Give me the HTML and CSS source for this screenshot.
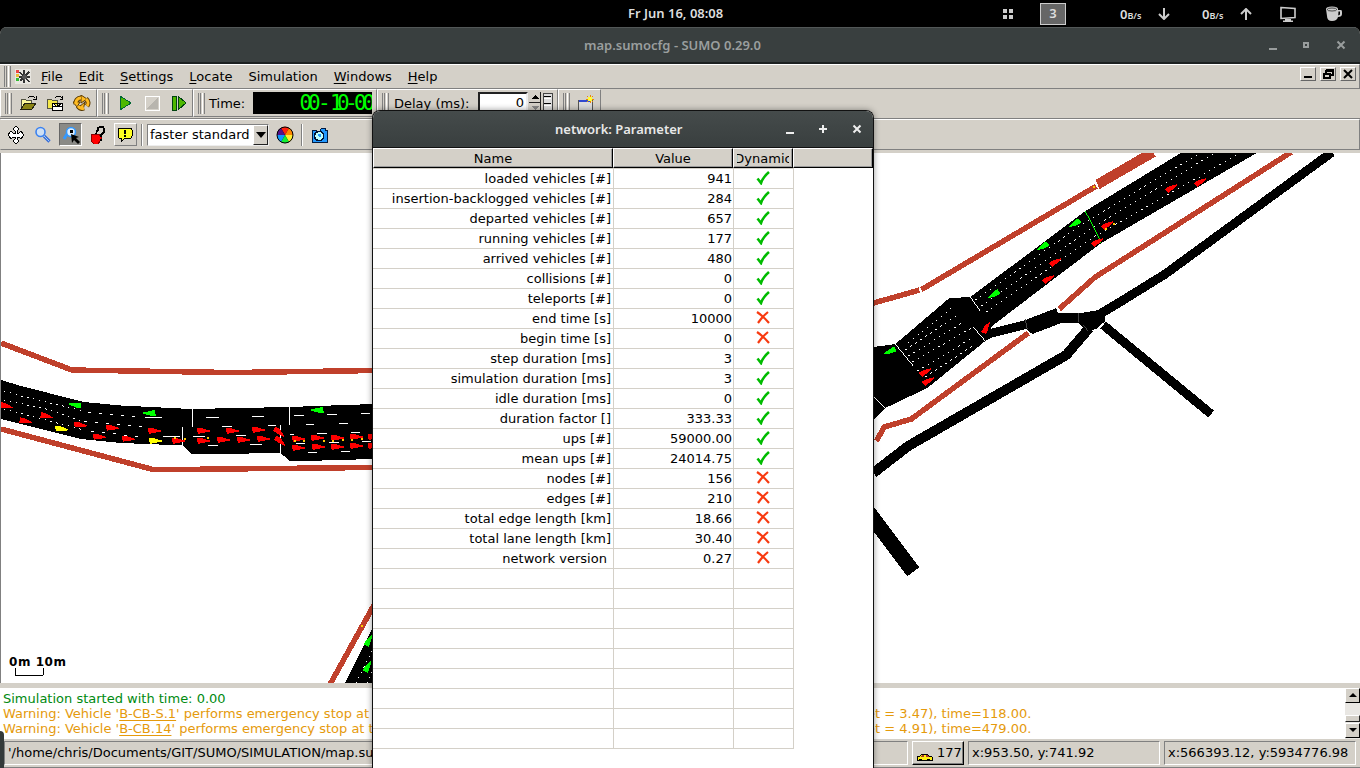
FILE: index.html
```
<!DOCTYPE html>
<html lang="en">
<head>
<meta charset="utf-8">
<title>map.sumocfg - SUMO 0.29.0</title>
<link rel="stylesheet" href="styles.css">
</head>
<body>
<header class="panel">
  <span class="clock">Fr Jun 16, 08:08</span>
  <div class="tray">
    <svg class="grid" width="10" height="10"><path d="M0 0h4v4H0zM6 0h4v4H6zM0 6h4v4H0zM6 6h4v4H6z"/></svg>
    <span class="workspace">3</span>
    <span class="net">0<small>B/s</small></span>
    <svg class="arrow" width="12" height="12"><path d="M6 0v11M1 6l5 5 5-5"/></svg>
    <span class="net">0<small>B/s</small></span>
    <svg class="arrow" width="12" height="12"><path d="M6 12V1M1 6l5-5 5 5"/></svg>
    <svg class="monitor" width="16" height="16"><path d="M1 1.500l14 1v9l-14 1z" fill="none" stroke="#ccc" stroke-width="1.600"/><path d="M5 13h6v1.500h2V16H3v-1.500h2z" fill="#ccc"/></svg>
    <svg class="cup" width="17" height="16"><path d="M0 3q0-2.500 6-2.500T12 3v1h3q1 0 1 2v2q0 3-4 3-1 4-6 4T1 10z" fill="#ccc"/><ellipse cx="6" cy="3.500" rx="4.800" ry="1.500" fill="none" stroke="#222" stroke-width=".8"/><path d="M12.500 5.500h1.500v3l-1.800 1z" fill="#000"/></svg>
  </div>
</header>

<main class="app">
  <div class="titlebar">
    <span class="title">map.sumocfg - SUMO 0.29.0</span>
    <svg class="winbtns" width="82" height="12"><path d="M3 9h8v2H3zM37 3h6v6h-6zM39 5v2h2V5z" fill="#999d9d" fill-rule="evenodd"/><path d="M71.500 2.500l7 7m0-7l-7 7" stroke="#999d9d" stroke-width="2"/></svg>
  </div>

  <nav class="menubar">
    <i class="grip"></i>
    <svg class="logo" width="16" height="16" shape-rendering="crispEdges"><path d="M0 0h16v15H0z" fill="#e8e6e0"/><path d="M1 1h3v3H1z" fill="#e44"/><path d="M1 5h3v3H1z" fill="#eb3"/><path d="M1 9h3v3H1z" fill="#3b3"/><path d="M9 1v13M4 8h11M5 3l9 10M14 3L5 12" stroke="#333" stroke-width="1.500"/><path d="M9 5l3 3-3 3-3-3z" fill="#555"/></svg>
    <span><u>F</u>ile</span><span><u>E</u>dit</span><span><u>S</u>ettings</span><span><u>L</u>ocate</span><span>Simulation</span><span><u>W</u>indows</span><span><u>H</u>elp</span>
    <div class="mdi">
      <b><svg width="14" height="12"><path d="M3 8h8v2H3z"/></svg></b>
      <b><svg width="14" height="12" shape-rendering="crispEdges"><path d="M5 2h7v5h-2M5 2v3M5 3h7M3 6h6v4H3zM3 6.500h6" fill="none" stroke="#000" stroke-width="1.300"/></svg></b>
      <b><svg width="14" height="12"><path d="M3 2l8 8m0-8l-8 8" stroke="#000" stroke-width="2"/></svg></b>
    </div>
  </nav>

  <div class="toolrow">
    <div class="tools files">
      <i class="grip"></i>
      <svg width="18" height="16" shape-rendering="crispEdges"><path d="M2 4h4l1 1h5v9H2z" fill="#fbf99c" stroke="#554" /><path d="M2 14l4-6h11l-4 6z" fill="#8a8414" stroke="#221"/><path d="M9 3l2-2h3l2 2m1-2v3h-3" fill="none" stroke="#000"/></svg>
      <svg width="18" height="16" shape-rendering="crispEdges"><path d="M1 4h4l1 1h5v8H1z" fill="#f4e848" stroke="#554"/><path d="M9 3l2-2h3l2 2m0-2v3h-2" fill="none" stroke="#000"/><path d="M6 8h10v7H6zM6 11h10M11 8v4M8 9l3 3 4-3" fill="#fff" stroke="#000"/></svg>
      <svg width="18" height="16"><path d="M8 3a5 5 0 0 0-5 6m2 2a5 5 0 0 0 6 2m3-2a5 5 0 0 0-1-7" fill="none" stroke="#5a3a00" stroke-width="5"/><path d="M8 0l6 4-6 4zM0 7h7L4 12zM10 15l-4-3 6-5z" fill="#fb2" stroke="#5a3a00"/><path d="M8 3a5 5 0 0 0-5 6m2 2a5 5 0 0 0 6 2m3-2a5 5 0 0 0-1-7" fill="none" stroke="#fb2" stroke-width="3"/></svg>
    </div>
    <div class="tools run">
      <i class="grip"></i>
      <svg width="16" height="16" shape-rendering="crispEdges"><path d="M3 1l11 7-11 7z" fill="#4db800" stroke="#063"/></svg>
      <svg width="16" height="16" shape-rendering="crispEdges"><path d="M1 1h14v14H1z" fill="#d4d0c8" stroke="#fff"/><path d="M14 2v12H2z" fill="#b8b5ae"/></svg>
      <svg width="16" height="16" shape-rendering="crispEdges"><path d="M1 1h4v14H1zM7 1l8 7-8 7z" fill="#4db800" stroke="#041"/></svg>
    </div>
    <div class="tools time">
      <i class="grip"></i><span>Time:</span>
      <svg class="lcd" width="119" height="22"><text y="18" x="46.500 55 65 77 84 92 101 109.500">00-10-00</text></svg>
    </div>
    <div class="tools delay">
      <i class="grip"></i><span>Delay (ms):</span>
      <span class="field">0</span>
      <svg class="spin" width="24" height="22" shape-rendering="crispEdges"><path d="M0 0h12v10H0zM0 11h12v10H0z" fill="#d4d0c8"/><path d="M0 10h11V0M0 21h11V11" fill="none" stroke="#222"/><path d="M6 3l4 4H2z"/><path d="M6 18l4-4H2z" fill="#888"/><path d="M14 1h9v21h-9z" fill="#ddd" stroke="#444"/><path d="M15 4h7M15 11h7M15 18h7" stroke="#000"/><path d="M15 6h7M15 13h7" stroke="#fff"/></svg>
    </div>
    <div class="tools view">
      <i class="grip"></i>
      <svg width="18" height="16" shape-rendering="crispEdges"><path d="M1 5h14v11H1z" fill="#ddd" stroke="#555"/><path d="M2 5h12v2H2z" fill="#3048d0"/><path d="M13 0v8M9 4h8M10 1l6 6M16 1l-6 6" stroke="#e80"/><path d="M11 2h4v4h-4z" fill="#ff3"/></svg>
    </div>
  </div>

  <div class="viewbar">
    <svg class="vb" width="18" height="18" shape-rendering="crispEdges"><path d="M9 0l3 3-2 2v2h2l2-2 3 4-3 4-2-2h-2v2l2 2-3 3-3-3 2-2v-2H6l-2 2-3-4 3-4 2 2h2V5L6 3z" fill="#fff" stroke="#000"/></svg>
    <svg class="vb" width="18" height="18"><path d="M10 10l5.500 5.500" stroke="#3b6fd8" stroke-width="3.200"/><path d="M10 10l5 5" stroke="#9cf"/><circle cx="6.500" cy="6" r="4.500" fill="#cfe0f4" stroke="#3b82f0" stroke-width="1.600"/></svg>
    <span class="pressed"><svg width="18" height="18"><path d="M5 8l-3 5" stroke="#39f" stroke-width="3"/><circle cx="9" cy="6" r="4.500" fill="#def" stroke="#39f" stroke-width="1.600"/><path d="M8 4h3v3H8z"/><path d="M9 8l8 3-3 1 4 4-2 2-4-4-2 3z"/></svg></span>
    <svg class="vb" width="18" height="18" shape-rendering="crispEdges"><path d="M3 8h3l1 1 2-1 3 2v4l-3 4H5l-3-3v-5z" fill="#f00" stroke="#800"/><path d="M7 8l1-3 2-1M9 4V2l2-1h3l1 2v3l-3 3v2M12 13v2" fill="none" stroke="#000" stroke-width="1.600"/></svg>
    <span class="raised"><svg width="16" height="16" shape-rendering="crispEdges"><path d="M2 1h12l1 2v6l-1 2H8l-4 4v-4H2L1 9V3z" fill="#ff2" stroke="#000"/><path d="M7 3h2v4H7zM7 8h2v2H7z"/></svg></span>
    <i class="vsep"></i>
    <span class="combo">faster standard<b><svg width="12" height="8"><path d="M1 1h10L6 7z"/></svg></b></span>
    <svg class="wheel" width="18" height="18" viewBox="-9 -9 18 18"><circle r="8"/><path d="M0 0L-4-7A8 8 0 0 1 4-7z" fill="#f21"/><path d="M0 0L4-7A8 8 0 0 1 8 0z" fill="#f80"/><path d="M0 0H8A8 8 0 0 1 4 7z" fill="#fe3"/><path d="M0 0L4 7A8 8 0 0 1-4 7z" fill="#1e3"/><path d="M0 0L-4 7A8 8 0 0 1-8 0z" fill="#19f"/><path d="M0 0H-8A8 8 0 0 1-4-7z" fill="#518"/><circle r="8" fill="none" stroke="#000"/></svg>
    <i class="vsep"></i>
    <svg class="cam" width="18" height="16" shape-rendering="crispEdges"><path d="M1 3h4v2h4V3l2-2h3v2h2v12H1z" fill="#29f" stroke="#001a40"/><circle cx="8" cy="9" r="4.500" fill="#bff" stroke="#013" stroke-width="1.500"/><path d="M7 7h3v3H8z" fill="#29f"/></svg>
  </div>

  <svg class="map" width="1360" height="530" viewBox="0 153 1360 530" shape-rendering="crispEdges">
    <g class="track">
      <path d="M0 343L71 370 231 372.500 373 370.500M0 429L152 469.500H180L373 467.500"/>
      <path d="M873 303L919 290M921 289.500L1096 186M1059 309L1095 277 1291 152M1028 333L911 419 884 427 876 441M329 685L375 602"/>
      <path d="M1097 184.500L1153 152" stroke-width="10"/>
    </g>
    <g class="road">
      <path d="M0 380L20 386 83 402 120 405.500 190 409 288 407 373 404V459L289 461.500 280 453 191 454.500 182 445.500 120 443 80 439 0 419z"/>
      <path d="M344 684L375 622V684z"/>
      <path d="M1182 152L1085 211 970 297 949 298 895 344 873 347V420L885 408 927 388 985 341 993 337 1026 329 1032 334 1061 323 1080 323 1079 313 1058 314 1056 308 1025 320 990 329 993 325 1060 274 1101 243 1258 152z"/>
      <path d="M1058 313H1080L1105 309V321L1096 329 1086 331 1078 323H1058z"/>
    </g>
    <g class="lane">
      <path d="M1098 315L1123 300 1165 274 1332 152M1103 325L1211 414"/>
      <path d="M1089 328L1066 355 908 446 873 473" stroke-width="10"/>
      <path d="M868 512L913 572" stroke-width="15"/>
    </g>
    <g class="dots">
      <path d="M3 391L20 396 83 411M3 400L50 410 83 422M3 409L83 430M908 343L955 305M905 350L959 314M908 356L965 321M912 362L971 328M917 371L973 337M925 377L975 344M975 300L1085 222 1200 153M981 306L1090 229 1214 153M986 312L1095 236 1240 153M355 684L373 648M366 684L373 668"/>
      <path class="mid" d="M87 412L136 417M83 421L142 427M90 431L140 437"/>
    </g>
    <path class="dash" d="M144 417.500h17M162 436.500h17M205 417.500h13M251 416.500h12M221 426.500h10M267 425.500h8M192 436.500h12M235 435.500h10M207 445.500h10M249 444.500h12M293 415.500h10M326 414.500h10M360 413.500h9M305 424.500h8M338 423.500h9M316 433.500h10M350 432.500h9M289 434.500h4M295 443.500h9M328 442.500h10M361 441.500h9M307 452.500h9M340 451.500h9M191.500 409v18M181.500 427v19M288.500 407v18M279.500 425v28M895 344l18 22M970 297l10 14M973 327l12 14M873 396l12 12M919 286l2 6M1095 180l3 7"/>
    <path d="M1025 319l2 10M1078 313v9M1083 325l5 6" stroke="#444"/>
    <path d="M1085 211l9 17 7 15" stroke="#0f0"/>
    <g id="vehicles"></g>
    <text class="scale" x="8" y="666" textLength="57">0m 10m</text>
    <path d="M14.500 668v7.500h28V668" fill="none" stroke="#000"/>
  </svg>

  <div class="log">
    <div class="lines">
      <p class="ok">Simulation started with time: 0.00</p>
      <p><span>Warning: Vehicle '<u>B-CB-S.1</u>' performs emergency stop at</span><span class="tail">et = 3.47), time=118.00.</span></p>
      <p><span>Warning: Vehicle '<u>B-CB.14</u>' performs emergency stop at t</span><span class="tail">et = 4.91), time=479.00.</span></p>
    </div>
    <div class="scroll"><b><svg width="8" height="5"><path d="M4 0l4 4H0z"/></svg></b><i></i><b><svg width="8" height="5"><path d="M0 0h8L4 4z"/></svg></b></div>
  </div>

  <footer class="status">
    <span class="sunk path">'/home/chris/Documents/GIT/SUMO/SIMULATION/map.sumocfg' loaded.</span>
    <span class="count"><svg width="17" height="9" shape-rendering="crispEdges"><path d="M1 4l3-1 2-2h5l2 2 3 1v3H1z" fill="#fe1" stroke="#000"/><path d="M6 2h2v2H5zM10 2h1l2 2h-3z" fill="#a33"/><path d="M3 6h3v2H3zM11 6h3v2h-3z"/></svg>177</span>
    <span class="sunk pos">x:953.50, y:741.92</span>
    <span class="sunk geo">x:566393.12, y:5934776.98</span>
  </footer>
</main>

<section class="dialog">
  <div class="dtitle">
    <span class="title">network: Parameter</span>
    <svg class="winbtns" width="82" height="12"><path d="M5 9h8v2H5zM38 5h8v2h-8zM41 2h2v8h-2z" fill="#eee"/><path d="M72.500 2.500l7 7m0-7l-7 7" stroke="#eee" stroke-width="2"/></svg>
  </div>
  <div class="thead"><span>Name</span><span>Value</span><span class="dyn"><em>Dynamic</em></span><span></span></div>
  <div class="tbody" id="rows"></div>
</section>
<i class="corner"></i>
<script src="app.js"></script>
</body>
</html>
```
FILE: styles.css
```
* { box-sizing: border-box; }
body { margin: 0; width: 1360px; height: 768px; overflow: hidden; background: #000; font: 13px "DejaVu Sans", sans-serif; color: #000; position: relative; }
svg { display: block; flex: none; }
p { margin: 0; }
.panel { height: 27px; display: flex; align-items: center; color: #ddd; font: 600 13px "Noto Sans", sans-serif; }
.clock { margin-left: 628px; width: 380px; flex: none; padding-bottom: 1px; }
.tray { display: flex; align-items: center; padding-left: -5px; }
.grid { fill: #ccc; margin-left: -5px; }
.workspace { width: 26px; height: 22px; border: 1px solid #ccc; background: #666; margin-left: 27px; text-align: center; line-height: 19px; }
.net { margin-left: 54px; width: 23px; white-space: nowrap; }
.net small { font-size: 9px; }
.arrow { fill: none; stroke: #ccc; stroke-width: 2; margin-left: 15px; }
.arrow + .net { margin-left: 32px; }
.monitor { margin-left: 28px; }
.cup { margin-left: 30px; }

.app { height: 741px; display: flex; flex-direction: column; background: #d4d0c8; border-radius: 7px 7px 0 0; overflow: hidden; }
.titlebar { height: 37px; flex: none; background: #393f3f; border-top: 1px solid #525757; border-bottom: 2px solid #1c2020; display: flex; align-items: center; color: #9a9e9e; }
.title { font: 600 13px "Noto Sans", sans-serif; white-space: nowrap; flex: none; }
.titlebar .title { margin-left: 584px; width: 682px; }
.grip { width: 7px; height: 21px; flex: none; border: solid; border-width: 0 1px; border-color: #fff #808080; background: linear-gradient(90deg, #d4d0c8 1px, #808080 1px 2px, #d4d0c8 2px 3px, #fff 3px 4px, #d4d0c8 4px); margin-left: 4px; }
.menubar { height: 25px; flex: none; border-top: 1px solid #fff; border-bottom: 1px solid #808080; border-right: 1px solid #808080; display: flex; align-items: center; }
.logo { margin: 0 2px 0 4px; }
.menubar > span { padding: 0 8px; }
u { text-underline-offset: 2px; }
.mdi { margin-left: auto; display: flex; gap: 4px; padding-right: 3px; align-self: flex-start; padding-top: 2px; }
.mdi b { width: 16px; height: 14px; border: 1px solid; border-color: #fff #666 #666 #fff; }
.toolrow { height: 30px; flex: none; display: flex; border-bottom: 1px solid #808080; }
.tools { height: 28px; border: 1px solid; border-color: #fff #808080 #808080 #fff; display: flex; align-items: center; }
.files { width: 97px; padding-right: 5px; }
.files svg { margin-left: 7px; }
.files svg + svg { margin-left: 9px; }
.run { width: 96px; }
.run svg { margin-left: 8px; }
.run svg + svg { margin-left: 11px; }
.time { width: 184px; }
.time span { margin-left: 4px; width: 44px; }
.lcd { background: #000; fill: #0f0; font: 21px "Liberation Sans Narrow", "DejaVu Sans Mono", monospace; }
.delay { width: 181px; }
.delay > span:first-of-type { margin: 0 7px 0 5px; width: 77px; }
.field { width: 50px; height: 22px; background: #fff; border: 2px solid; border-color: #222 #eee #eee #222; text-align: right; padding: 1px 2px; }
.spin { margin-left: 1px; }
.view { width: 43px; }
.view svg { margin-left: 7px; }
.viewbar { height: 31px; margin-bottom: 3px; flex: none; border: 1px solid; border-color: #fff #808080 #808080 #d4d0c8; display: flex; align-items: center; }
.vb { margin-left: 6px; }
.vb + .vb { margin-left: 9px; }
.pressed { width: 23px; height: 23px; margin-left: 7px; background: #8a8a86; border: 1px solid; border-color: #666 #fff #fff #666; padding: 2px; }
.pressed + .vb { margin-left: 7px; }
.raised { width: 23px; height: 23px; margin-left: 7px; border: 1px solid; border-color: #fff #808080 #808080 #fff; padding: 3px 2px; }
.vsep { width: 2px; height: 22px; border-left: 1px solid #808080; border-right: 1px solid #fff; margin-left: 4px; }
.combo { width: 122px; height: 22px; margin-left: 4px; background: #fff; border: 1px solid; border-color: #808080 #eee #eee #808080; display: flex; align-items: center; padding-left: 2px; white-space: nowrap; }
.combo b { margin-left: auto; width: 15px; height: 20px; background: #d4d0c8; border: 1px solid; border-color: #fff #222 #222 #fff; display: flex; align-items: center; justify-content: center; flex: none; }
.wheel { margin-left: 7px; }
.wheel + .vsep { margin-left: 7px; }
.cam { margin-left: 8px; }

.map { background: #fff; flex: none; border-left: 1px solid #808080; }
.track { fill: none; stroke: #c0402b; stroke-width: 5.5; }
.lane { fill: none; stroke: #000; stroke-width: 9; }
.dots { fill: none; stroke: #fff; stroke-width: 1; stroke-dasharray: 1.5 4.5; }
.dots .mid { stroke-dasharray: 3 8; }
.dash { stroke: #fff; stroke-width: 1; }
.scale { font: bold 12px "DejaVu Sans", sans-serif; }

.log { margin-top: 5px; height: 51px; flex: none; background: #fff; display: flex; }
.lines { flex: 1; padding: 3px 0 0 3px; line-height: 15px; color: #e59a0c; }
.lines p { display: flex; white-space: nowrap; }
.lines p > span:first-child { width: 864px; }
.lines .ok { color: #008a10; }
.scroll { width: 15px; display: flex; flex-direction: column; background: #e9e7e3; }
.scroll b { height: 15px; background: #d4d0c8; border: 1px solid; border-color: #fff #000 #000 #fff; display: flex; align-items: center; justify-content: center; }
.scroll i { height: 7px; margin: 12px 0 1px; background: #d4d0c8; border: 1px solid; border-color: #fff #222 #222 #fff; }
.status { flex: 1; display: flex; align-items: flex-start; padding: 2px 4px 0; border-bottom: 1px solid #808080; }
.sunk { height: 24px; border: 1px solid; border-color: #808080 #fff #fff #808080; padding: 3px; white-space: nowrap; overflow: hidden; flex: none; }
.path { width: 904px; }
.count { width: 52px; height: 24px; margin-left: 4px; border: 1px solid; border-color: #fff #000 #000 #fff; box-shadow: inset -1px -1px #808080; display: flex; padding: 3px; }
.count svg { margin: 8px 4px 0 0; }
.pos { width: 192px; margin-left: 4px; }
.geo { width: 192px; margin-left: 4px; }

.dialog { position: absolute; left: 372px; top: 110px; width: 502px; height: 658px; background: #fff; border: 1px solid #111; border-bottom: 0; border-radius: 8px 8px 0 0; overflow: hidden; box-shadow: 0 0 6px rgba(0,0,0,.4); }
.dtitle { height: 37px; background: linear-gradient(#454b4b, #393f3f); border-bottom: 1px solid #111; display: flex; align-items: center; color: #e8e8e8; }
.dtitle .title { margin-left: 182px; width: 226px; }
.thead { height: 20px; display: flex; background: #d4d0c8; }
.thead span { width: 120px; border: 1px solid; border-color: #fff #000 #000 #fff; box-shadow: inset -1px -1px #999; text-align: center; line-height: 20px; }
.thead span:first-child { width: 240px; }
.thead span:nth-child(4) { width: 80px; }
.thead .dyn { width: 60px; padding: 0 3px; display: flex; }
.dyn em { font-style: normal; overflow: hidden; width: 52px; display: flex; justify-content: center; }
.tbody { width: 421px; border-top: 1px solid #d4d0c8; }
.row { height: 20px; display: flex; border-bottom: 1px solid #d4d0c8; line-height: 19px; text-align: right; white-space: pre; }
.row span { border-right: 1px solid #d4d0c8; width: 120px; padding-right: 1px; }
.row span:first-child { width: 241px; }
.row span:last-child { width: 60px; padding: 2px 0 0 22px; }
.row span:nth-child(1) { padding-right: 2px; }
.corner { position: absolute; left: 0; top: 731px; width: 4px; height: 37px; background: #343a3a; border-top-right-radius: 4px; }
```
FILE: app.js
```
const yes = '<svg width="14" height="14"><path d="M1.5 7.500L5 12Q7 6 13 1" fill="none" stroke="#0b0" stroke-width="2.600"/></svg>';
const no = '<svg width="14" height="14"><path d="M1 1Q7 5 13 12M12 1Q7 5 2 12" fill="none" stroke="#f83a10" stroke-width="2.200"/></svg>';
const data = [
  ["loaded vehicles [#]", "941", 1], ["insertion-backlogged vehicles [#]", "284", 1],
  ["departed vehicles [#]", "657", 1], ["running vehicles [#]", "177", 1],
  ["arrived vehicles [#]", "480", 1], ["collisions [#]", "0", 1], ["teleports [#]", "0", 1],
  ["end time [s]", "10000", 0], ["begin time [s]", "0", 0], ["step duration [ms]", "3", 1],
  ["simulation duration [ms]", "3", 1], ["idle duration [ms]", "0", 1],
  ["duration factor []", "333.33", 1], ["ups [#]", "59000.00", 1], ["mean ups [#]", "24014.75", 1],
  ["nodes [#]", "156", 0], ["edges [#]", "210", 0], ["total edge length [km]", "18.66", 0],
  ["total lane length [km]", "30.40", 0], ["network version ", "0.27", 0]
];
while (data.length < 29) data.push(["", "", null]);
document.getElementById("rows").innerHTML = data.map(([n, v, d]) =>
  `<div class="row"><span>${n}</span><span>${v}</span><span>${d === null ? "" : d ? yes : no}</span></div>`).join("");

// x, y, heading in degrees
const cars = {
  "#f00": [[5,406,15],[24,421,12],[45,416,15],[79,425,8],[98,437,3],[111,428,4],[127,439,4],[153,431,0],[177,441,0],
    [202,431,0],[202,441,0],[231,431,0],[222,440,0],[242,440,0],[257,430,0],[262,439,0],[278,432,40],[279,441,40],
    [297,439,0],[297,448,0],[316,438,0],[317,447,0],[336,438,0],[336,447,0],[355,437,0],[355,446,0],[373,437,0],[373,446,0],
    [925,372,-30],[928,381,-30],[986,328,-60],[1048,279,-30],[1055,262,-30],[1107,225,-30],[1097,242,-30],[1171,188,-30],[1200,182,-30]],
  "#ff0": [[60,429,8],[154,441,0]],
  "#0f0": [[75,405,190],[149,413,180],[317,410,180],[890,351,158],[994,294,150],[1043,246,150],[1075,223,150],[368,641,-60],[367,667,-60]]
};
const blinkers = [[184,439],[207,438],[174,438],[294,441],[303,441],[323,441],[332,441],[342,440],[351,440],[361,439],[1106,229],[1114,224],[361,626],[1094,187]];
document.getElementById("vehicles").innerHTML =
  Object.entries(cars).map(([c, list]) => list.map(([x, y, a]) =>
    `<path fill="${c}" d="M-6 -2.500L0 -2.500L7 -.5V.5L0 2L-5 3z" transform="translate(${x} ${y}) rotate(${a})"/>`).join("")).join("") +
  blinkers.map(([x, y]) => `<rect x="${x - 1}" y="${y - 1}" width="2" height="2" fill="#fc0"/>`).join("");
```
